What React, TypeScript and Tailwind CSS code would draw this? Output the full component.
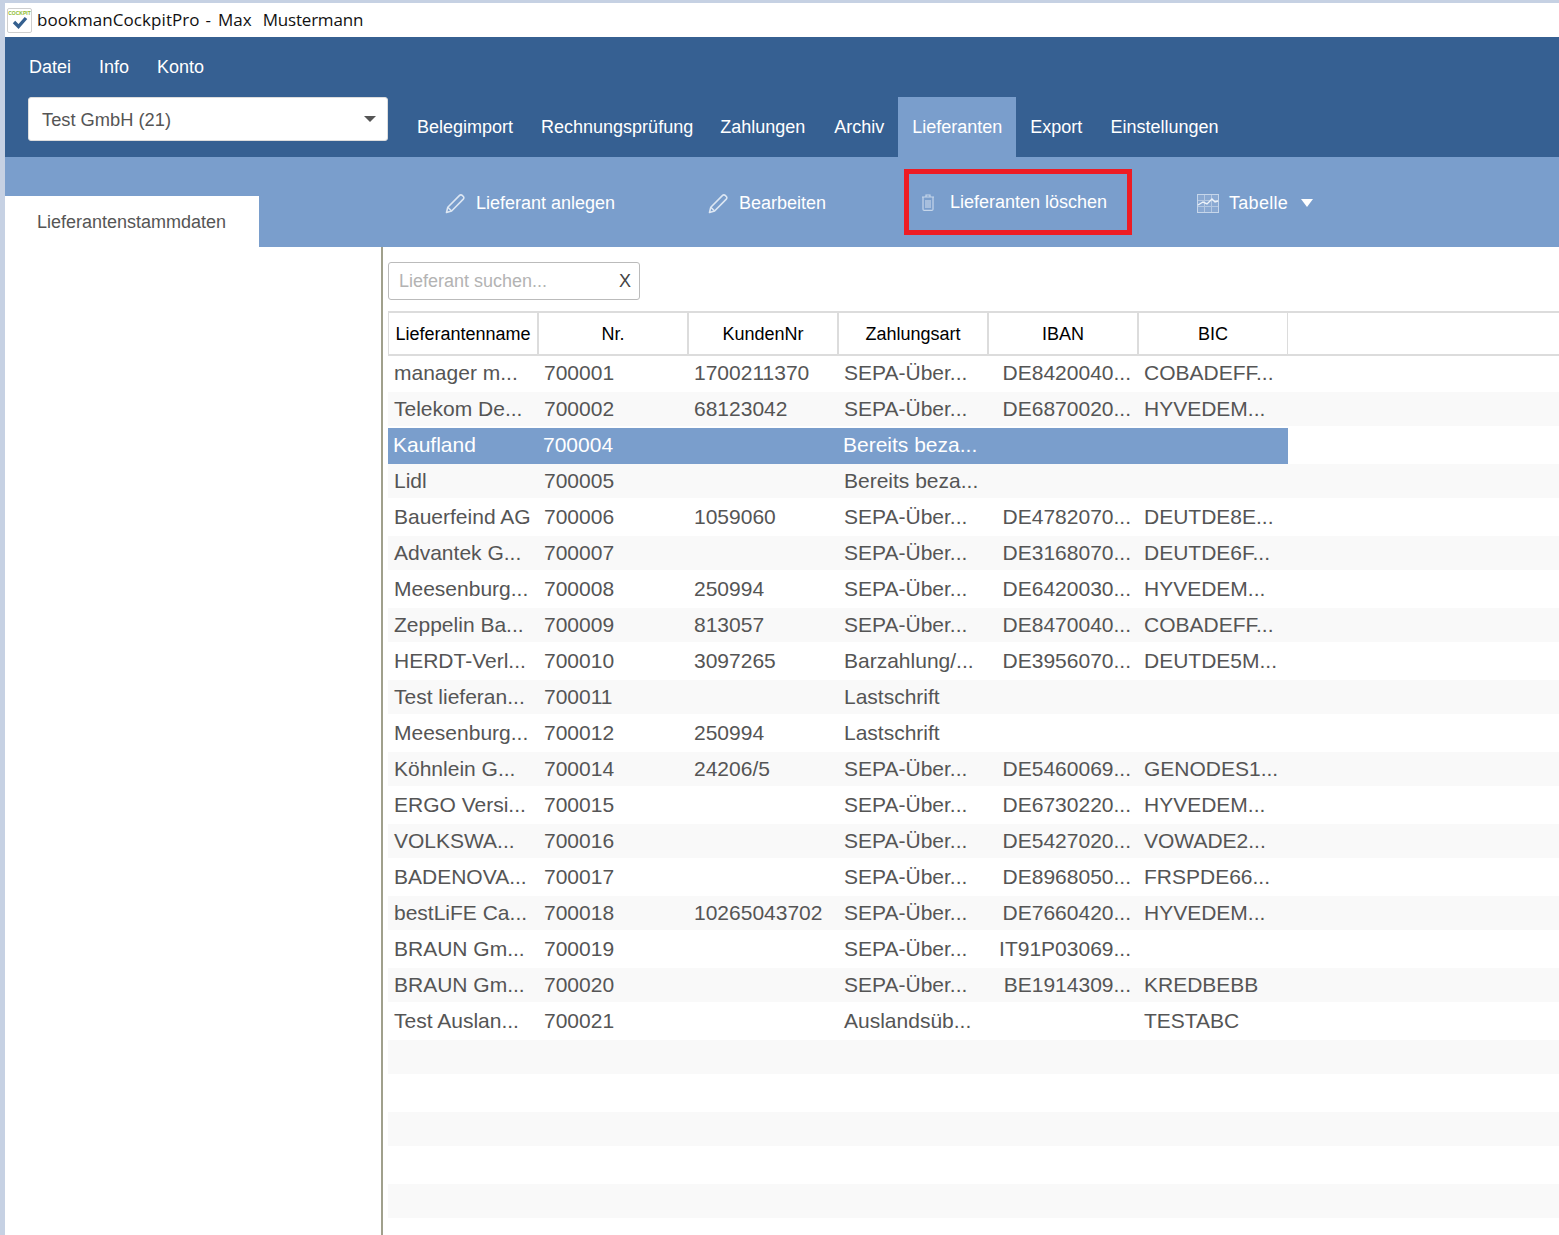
const rows: string[][] = [
  ["manager m...", "700001", "1700211370", "SEPA-Über...", "DE8420040...", "COBADEFF..."],
  ["Telekom De...", "700002", "68123042", "SEPA-Über...", "DE6870020...", "HYVEDEM..."],
  ["Kaufland", "700004", "", "Bereits beza...", "", ""],
  ["Lidl", "700005", "", "Bereits beza...", "", ""],
  ["Bauerfeind AG", "700006", "1059060", "SEPA-Über...", "DE4782070...", "DEUTDE8E..."],
  ["Advantek G...", "700007", "", "SEPA-Über...", "DE3168070...", "DEUTDE6F..."],
  ["Meesenburg...", "700008", "250994", "SEPA-Über...", "DE6420030...", "HYVEDEM..."],
  ["Zeppelin Ba...", "700009", "813057", "SEPA-Über...", "DE8470040...", "COBADEFF..."],
  ["HERDT-Verl...", "700010", "3097265", "Barzahlung/...", "DE3956070...", "DEUTDE5M..."],
  ["Test lieferan...", "700011", "", "Lastschrift", "", ""],
  ["Meesenburg...", "700012", "250994", "Lastschrift", "", ""],
  ["Köhnlein G...", "700014", "24206/5", "SEPA-Über...", "DE5460069...", "GENODES1..."],
  ["ERGO Versi...", "700015", "", "SEPA-Über...", "DE6730220...", "HYVEDEM..."],
  ["VOLKSWA...", "700016", "", "SEPA-Über...", "DE5427020...", "VOWADE2..."],
  ["BADENOVA...", "700017", "", "SEPA-Über...", "DE8968050...", "FRSPDE66..."],
  ["bestLiFE Ca...", "700018", "10265043702", "SEPA-Über...", "DE7660420...", "HYVEDEM..."],
  ["BRAUN Gm...", "700019", "", "SEPA-Über...", "IT91P03069...", ""],
  ["BRAUN Gm...", "700020", "", "SEPA-Über...", "BE1914309...", "KREDBEBB"],
  ["Test Auslan...", "700021", "", "Auslandsüb...", "", "TESTABC"],
  ["", "", "", "", "", ""],
  ["", "", "", "", "", ""],
  ["", "", "", "", "", ""],
  ["", "", "", "", "", ""],
  ["", "", "", "", "", ""],
];

const heads = ["Lieferantenname", "Nr.", "KundenNr", "Zahlungsart", "IBAN", "BIC"];
const nav = ["Belegimport", "Rechnungsprüfung", "Zahlungen", "Archiv", "Lieferanten", "Export", "Einstellungen"];

function PencilIcon() {
  return (
    <svg width="21" height="21" viewBox="0 0 21 21" fill="none" stroke="#dde7f3" strokeWidth="1.6" strokeLinejoin="round" className="shrink-0">
      <path d="M1.5 19.5l1.3-5.2L14.6 2.4a1.8 1.8 0 0 1 2.6 0l1.1 1.1a1.8 1.8 0 0 1 0 2.6L6.6 18z" />
      <path d="M2.8 14.3l3.8 3.7" />
    </svg>
  );
}

function TrashIcon() {
  return (
    <svg width="14" height="17" viewBox="0 0 14 17" fill="none" stroke="#c6d6ea" strokeWidth="1.2" className="shrink-0">
      <path d="M1 3h12M5 3V1h4v2M2 3v12.2c0 .7.5 1.2 1.2 1.2h7.6c.7 0 1.2-.5 1.2-1.2V3z" />
      <path d="M5 6v8M7 6v8M9 6v8" />
    </svg>
  );
}

function ChartIcon() {
  return (
    <svg width="22" height="19" viewBox="0 0 22 19" fill="#ffffff" fillOpacity="0.12" stroke="#c6d6ea" strokeWidth="1" className="shrink-0">
      <rect x="0.5" y="0.5" width="21" height="18" />
      <path d="M0.5 6.5h21M0.5 12.5h21M7.5 0.5v18M14.5 0.5v18" opacity="0.7" />
      <path d="M1 11l5-3 4 2 5-5 3 3 3-1" strokeWidth="1.4" stroke="#eef3f9" fill="none" />
    </svg>
  );
}

export default function App() {
  return (
    <div className="w-[1559px] h-[1235px] overflow-hidden flex flex-col pt-[3px] pl-[5px] bg-[#c6d1e3] font-['Liberation_Sans',Arial,sans-serif]">
      <div className="h-[34px] bg-white flex items-center pl-[2px] shrink-0">
        <div className="w-[25px] h-[25px] mt-[1px] bg-white border border-[#cfcfcf] rounded-[2px] flex flex-col items-center shrink-0 overflow-hidden">
          <span className="text-[5px] leading-[6px] font-bold text-[#8dbb2f] mt-[1px]">COCKPIT</span>
          <svg width="16" height="13" viewBox="0 0 16 13" fill="none" stroke="#35608f" strokeWidth="3.4">
            <path d="M2 6l4.5 4.5L14 2" />
          </svg>
        </div>
        <span className="ml-[5px] text-[17px] text-[#111] font-['Open_Sans',sans-serif] flex whitespace-pre">
          <span className="tracking-[0.06px]">bookmanCockpitPro</span>
          <span className="ml-[6px]">-</span>
          <span className="ml-[7px]">Max</span>
          <span className="ml-[11px] tracking-[-0.2px]">Mustermann</span>
        </span>
      </div>

      <div className="h-[120px] bg-[#366092] shrink-0 text-white text-[18px] flex flex-col">
        <div className="flex gap-[28px] pl-[24px] pt-[20px] h-[60px] leading-[20px]">
          <span>Datei</span>
          <span>Info</span>
          <span>Konto</span>
        </div>
        <div className="flex flex-1">
          <div className="ml-[23px] w-[360px] h-[44px] bg-white rounded-[3px] border border-[#ddd] flex items-center justify-between pl-[13px] pr-[11px] text-[#555]">
            <span className="text-[18.3px] pt-[1px]">Test GmbH (21)</span>
            <span className="w-0 h-0 border-x-[6px] border-x-transparent border-t-[6px] border-t-[#555]" />
          </div>
          <div className="ml-[15px] flex">
            {nav.map((n) => (
              <div key={n} className={`flex items-center pt-[1px] h-[60px] ${n === "Zahlungen" ? "pl-[13px] pr-[15px]" : "px-[14px]"} ${n === "Lieferanten" ? "bg-[#7a9ecc]" : ""}`}>
                {n}
              </div>
            ))}
          </div>
        </div>
      </div>

      <div className="h-[90px] bg-[#7a9ecc] shrink-0 flex text-white text-[18px]">
        <div className="w-[254px] h-[51px] mt-[39px] bg-white text-[#555] flex items-center pl-[32px] pt-[1px] shrink-0">Lieferantenstammdaten</div>
        <div className="flex items-center h-[90px] pt-[2px]">
          <div className="ml-[186px] flex items-center gap-[10px] w-[263px]"><PencilIcon /><span>Lieferant anlegen</span></div>
          <div className="flex items-center gap-[10px] w-[196px]"><PencilIcon /><span>Bearbeiten</span></div>
          <div className="w-[228px] h-[66px] border-[5px] border-[#ed1c24] flex items-center pl-[12px] gap-[15px] mb-[2px]"><TrashIcon /><span>Lieferanten löschen</span></div>
          <div className="ml-[65px] flex items-center gap-[10px]"><ChartIcon /><span className="tracking-[0.3px]">Tabelle</span><span className="ml-[3px] w-0 h-0 border-x-[6px] border-x-transparent border-t-[8px] border-t-white" /></div>
        </div>
      </div>

      <div className="flex-1 flex bg-white min-h-0">
        <div className="w-[378px] shrink-0 border-r-2 border-[#a0a08c]" />
        <div className="flex-1 min-w-0 pl-[5px] pt-[15px]">
          <div className="w-[252px] h-[38px] border border-[#bbb] rounded-[3px] flex items-center justify-between pl-[10px] pr-[8px] text-[18px]">
            <span className="text-[#b3b3b3]">Lieferant suchen...</span>
            <span className="text-[#444] pt-[1px]">X</span>
          </div>
          <div className="mt-[11px] h-[45px] flex border-y-2 border-[#dcdcdc] text-[18px] text-black">
            {heads.map((h) => (
              <div key={h} className="w-[150px] pt-[2px] border-x border-[#dcdcdc] flex items-center justify-center shrink-0">{h}</div>
            ))}
          </div>
          <div className="text-[21px] text-[#555]">
            {rows.map((r, i) => {
              const sel = i === 2;
              const bg = sel
                ? "h-[36px] bg-[#7a9ecc] text-white w-[900px] pl-[5px]"
                : i % 2 === 1
                  ? "h-[34px] bg-[#f9f9f9] pl-[6px]"
                  : "h-[36px] pl-[6px]";
              return (
                <div key={i} className="h-[36px]">
                  <div className={`flex ${bg}`}>
                    {r.map((c, j) => (
                      <div
                        key={j}
                        className={`h-[34px] flex items-center shrink-0 whitespace-nowrap w-[150px] ${j === 4 ? "justify-end pr-[13px]" : ""}`}
                      >
                        {c}
                      </div>
                    ))}
                  </div>
                </div>
              );
            })}
          </div>
        </div>
      </div>
    </div>
  );
}
